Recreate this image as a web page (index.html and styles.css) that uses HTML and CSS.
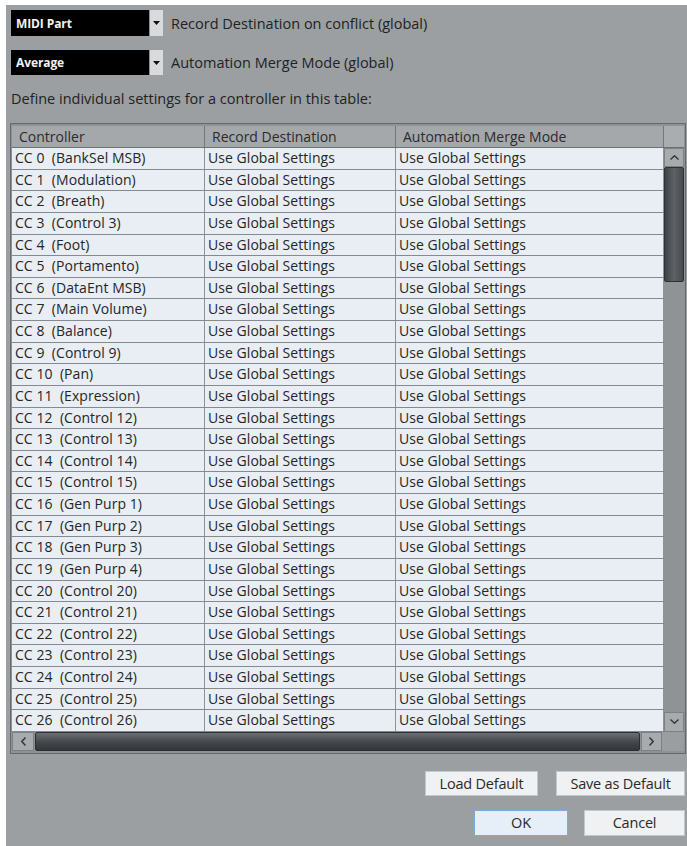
FILE: index.html
```html
<!DOCTYPE html>
<html>
<head>
<meta charset="utf-8">
<link rel="stylesheet" href="styles.css">
</head>
<body>
<div class="panel">
  <div class="opt">
    <div class="combo"><span class="combo-val">MIDI Part</span><span class="combo-btn"><svg width="7" height="4" viewBox="0 0 7 4"><path d="M0 0H7L3.5 4Z" fill="#111"/></svg></span></div>
    <span class="opt-label">Record Destination on conflict (global)</span>
  </div>
  <div class="opt opt2">
    <div class="combo"><span class="combo-val">Average</span><span class="combo-btn"><svg width="7" height="4" viewBox="0 0 7 4"><path d="M0 0H7L3.5 4Z" fill="#111"/></svg></span></div>
    <span class="opt-label">Automation Merge Mode (global)</span>
  </div>
  <p class="intro">Define individual settings for a controller in this table:</p>
  <div class="frame">
    <div class="head">
      <div class="hc">Controller</div>
      <div class="hc">Record Destination</div>
      <div class="hc">Automation Merge Mode</div>
      <div class="hcorner"></div>
    </div>
    <div class="body">
      <div class="rows">
        <div class="row"><div class="c">CC 0  (BankSel MSB)</div><div class="c">Use Global Settings</div><div class="c">Use Global Settings</div></div>
        <div class="row"><div class="c">CC 1  (Modulation)</div><div class="c">Use Global Settings</div><div class="c">Use Global Settings</div></div>
        <div class="row"><div class="c">CC 2  (Breath)</div><div class="c">Use Global Settings</div><div class="c">Use Global Settings</div></div>
        <div class="row"><div class="c">CC 3  (Control 3)</div><div class="c">Use Global Settings</div><div class="c">Use Global Settings</div></div>
        <div class="row"><div class="c">CC 4  (Foot)</div><div class="c">Use Global Settings</div><div class="c">Use Global Settings</div></div>
        <div class="row"><div class="c">CC 5  (Portamento)</div><div class="c">Use Global Settings</div><div class="c">Use Global Settings</div></div>
        <div class="row"><div class="c">CC 6  (DataEnt MSB)</div><div class="c">Use Global Settings</div><div class="c">Use Global Settings</div></div>
        <div class="row"><div class="c">CC 7  (Main Volume)</div><div class="c">Use Global Settings</div><div class="c">Use Global Settings</div></div>
        <div class="row"><div class="c">CC 8  (Balance)</div><div class="c">Use Global Settings</div><div class="c">Use Global Settings</div></div>
        <div class="row"><div class="c">CC 9  (Control 9)</div><div class="c">Use Global Settings</div><div class="c">Use Global Settings</div></div>
        <div class="row"><div class="c">CC 10  (Pan)</div><div class="c">Use Global Settings</div><div class="c">Use Global Settings</div></div>
        <div class="row"><div class="c">CC 11  (Expression)</div><div class="c">Use Global Settings</div><div class="c">Use Global Settings</div></div>
        <div class="row"><div class="c">CC 12  (Control 12)</div><div class="c">Use Global Settings</div><div class="c">Use Global Settings</div></div>
        <div class="row"><div class="c">CC 13  (Control 13)</div><div class="c">Use Global Settings</div><div class="c">Use Global Settings</div></div>
        <div class="row"><div class="c">CC 14  (Control 14)</div><div class="c">Use Global Settings</div><div class="c">Use Global Settings</div></div>
        <div class="row"><div class="c">CC 15  (Control 15)</div><div class="c">Use Global Settings</div><div class="c">Use Global Settings</div></div>
        <div class="row"><div class="c">CC 16  (Gen Purp 1)</div><div class="c">Use Global Settings</div><div class="c">Use Global Settings</div></div>
        <div class="row"><div class="c">CC 17  (Gen Purp 2)</div><div class="c">Use Global Settings</div><div class="c">Use Global Settings</div></div>
        <div class="row"><div class="c">CC 18  (Gen Purp 3)</div><div class="c">Use Global Settings</div><div class="c">Use Global Settings</div></div>
        <div class="row"><div class="c">CC 19  (Gen Purp 4)</div><div class="c">Use Global Settings</div><div class="c">Use Global Settings</div></div>
        <div class="row"><div class="c">CC 20  (Control 20)</div><div class="c">Use Global Settings</div><div class="c">Use Global Settings</div></div>
        <div class="row"><div class="c">CC 21  (Control 21)</div><div class="c">Use Global Settings</div><div class="c">Use Global Settings</div></div>
        <div class="row"><div class="c">CC 22  (Control 22)</div><div class="c">Use Global Settings</div><div class="c">Use Global Settings</div></div>
        <div class="row"><div class="c">CC 23  (Control 23)</div><div class="c">Use Global Settings</div><div class="c">Use Global Settings</div></div>
        <div class="row"><div class="c">CC 24  (Control 24)</div><div class="c">Use Global Settings</div><div class="c">Use Global Settings</div></div>
        <div class="row"><div class="c">CC 25  (Control 25)</div><div class="c">Use Global Settings</div><div class="c">Use Global Settings</div></div>
        <div class="row"><div class="c">CC 26  (Control 26)</div><div class="c">Use Global Settings</div><div class="c">Use Global Settings</div></div>
      </div>
      <div class="vscroll">
        <div class="sbtn vup"><svg width="9" height="5" viewBox="0 0 9 5"><path d="M0.5 4.5L4.5 0.8L8.5 4.5" fill="none" stroke="#333" stroke-width="1.4"/></svg></div>
        <div class="vthumb"></div>
        <div class="vtrack"></div>
        <div class="sbtn vdown"><svg width="9" height="5" viewBox="0 0 9 5"><path d="M0.5 0.5L4.5 4.2L8.5 0.5" fill="none" stroke="#333" stroke-width="1.4"/></svg></div>
      </div>
    </div>
    <div class="hscroll">
      <div class="sbtn hleft"><svg width="5" height="9" viewBox="0 0 5 9"><path d="M4.5 0.5L0.8 4.5L4.5 8.5" fill="none" stroke="#333" stroke-width="1.4"/></svg></div>
      <div class="hthumb"></div>
      <div class="sbtn hright"><svg width="5" height="9" viewBox="0 0 5 9"><path d="M0.5 0.5L4.2 4.5L0.5 8.5" fill="none" stroke="#333" stroke-width="1.4"/></svg></div>
      <div class="hcorner2"></div>
    </div>
  </div>
  <div class="btnrow">
    <button class="btn b-load">Load Default</button>
    <button class="btn b-save">Save as Default</button>
  </div>
  <div class="btnrow btnrow2">
    <button class="btn b-ok">OK</button>
    <button class="btn b-cancel">Cancel</button>
  </div>
</div>
</body>
</html>
```
FILE: styles.css
```css
html, body {
  margin: 0;
  padding: 0;
  background: #ffffff;
}
body {
  width: 687px;
  height: 846px;
  overflow: hidden;
  font-family: "Open Sans", "Noto Sans", sans-serif;
  color: #222;
}
.panel {
  margin: 5px 0 0 6px;
  height: 841px;
  background: #9b9fa2;
  padding: 5px 1px 0 4px;
  box-sizing: border-box;
}
.opt {
  display: flex;
  align-items: center;
  height: 26px;
  padding-left: 1px;
}
.opt2 {
  margin-top: 14px;
  height: 25px;
}
.combo {
  display: flex;
  height: 100%;
}
.combo-val {
  width: 138px;
  background: #000;
  color: #f2f2f2;
  font-size: 12px;
  font-weight: 700;
  display: flex;
  align-items: center;
  padding-left: 5px;
  box-sizing: border-box;
  letter-spacing: -0.1px;
}
.combo-btn {
  width: 14px;
  background: #d9dadb;
  display: flex;
  align-items: center;
  justify-content: center;
  border-left: 1px solid #8a8d90;
  box-sizing: border-box;
}
.opt-label {
  margin-left: 8px;
  font-size: 14.5px;
  color: #222;
}
.intro {
  margin: 15px 0 0 1px;
  font-size: 14.5px;
  line-height: 18px;
  color: #222;
}
.frame {
  margin-top: 15px;
  border: 1px solid #66696c;
  padding: 2px 1px 2px 1px;
  background: #8e9295;
}
.head {
  display: grid;
  grid-template-columns: 193px 191px 268px 20px;
  height: 22px;
  background: #a4a8ab;
  border-bottom: 1px solid #6c7073;
  box-sizing: border-box;
}
.hc {
  font-size: 14px;
  color: #2b2b2b;
  padding-left: 7px;
  line-height: 21px;
  border-right: 1px solid #74787b;
  white-space: nowrap;
  overflow: hidden;
}
.hcorner {
  background: #a9adb0;
}
.body {
  display: flex;
}
.rows {
  width: 652px;
}
.row {
  display: grid;
  grid-template-columns: 193px 191px 268px;
  height: 21.63px;
  background: #e9edf4;
  border-bottom: 1px solid #868a8f;
  box-sizing: border-box;
}
.c {
  font-size: 14px;
  line-height: 20px;
  color: #262626;
  padding-left: 3px;
  border-right: 1px solid #8f9398;
  white-space: pre;
  overflow: hidden;
  letter-spacing: 0.05px;
}
.vscroll {
  width: 20px;
  display: flex;
  flex-direction: column;
  background: #8d9194;
}
.sbtn {
  background: #a7abae;
  display: flex;
  align-items: center;
  justify-content: center;
  box-sizing: border-box;
  border: 1px solid #7d8184;
}
.vup {
  height: 19px;
}
.vdown {
  height: 20px;
}
.vthumb {
  height: 115px;
  background: linear-gradient(to right, #3f4347, #5e6266 50%, #464a4e);
  border: 1px solid #2f3235;
  border-radius: 2px;
  box-sizing: border-box;
}
.vtrack {
  flex: 1;
  background: #8f9396;
}
.hscroll {
  display: flex;
  height: 19px;
}
.hleft {
  width: 22px;
}
.hright {
  width: 21px;
}
.hthumb {
  flex: 1;
  margin: 0 1px;
  background: linear-gradient(to bottom, #6b6f73, #43474b 55%, #33373a);
  border: 1px solid #2c2f32;
  border-radius: 2px;
}
.hcorner2 {
  width: 22px;
  background: #9a9ea1;
}
.btnrow {
  display: flex;
  justify-content: flex-end;
  gap: 18px;
  margin-top: 17px;
  padding-right: 1px;
}
.btnrow2 {
  margin-top: 14px;
  gap: 16px;
}
.btn {
  font-family: "Open Sans", "Noto Sans", sans-serif;
  font-size: 14.5px;
  color: #2a2a2a;
  background: #eff1f3;
  border: 1px solid #c5c8ca;
  padding: 0;
  height: 25px;
  letter-spacing: -0.2px;
}
.b-load { width: 113px; }
.b-save { width: 129px; }
.btnrow2 .btn { height: 26px; }
.b-ok {
  width: 94px;
  background: #e6eef7;
  border-color: #7ea8d8;
}
.b-cancel { width: 101px; }
```
